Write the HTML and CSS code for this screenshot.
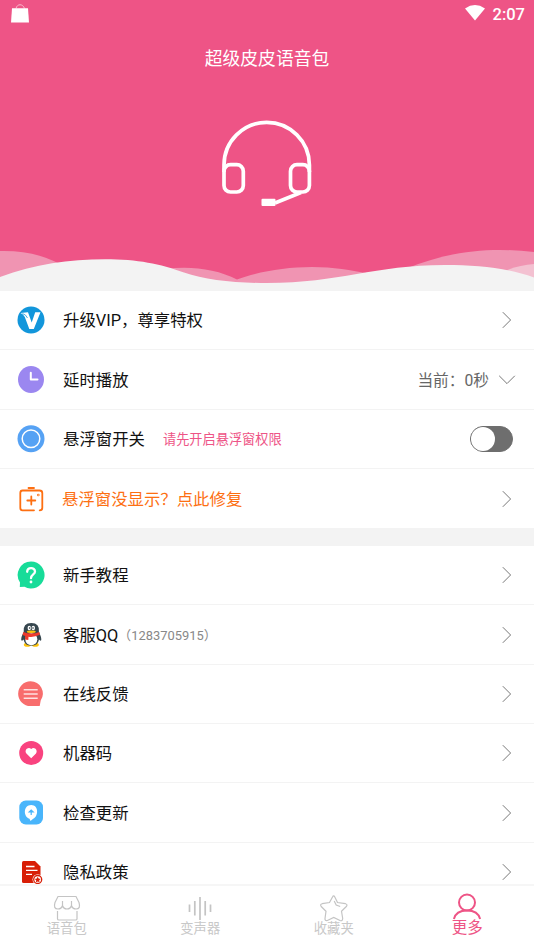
FILE: index.html
```html
<!DOCTYPE html>
<html lang="zh-CN">
<head>
<meta charset="utf-8">
<title>超级皮皮语音包</title>
<link rel="stylesheet" href="styles.css">
</head>
<body>
<div class="app">
  <header class="hero">
    <div class="status">
      <svg width="20" height="20" viewBox="0 0 20 20"><path d="M6 4.500C7-.5 13-.5 14.500 4.500" fill="none" stroke="#f8b9cd" stroke-width="1"/><path d="M2 4.300h16l1 14.200H1z" fill="#fff"/></svg>
      <span class="spacer"></span>
      <svg width="20" height="16" viewBox="0 0 20 16"><path d="M0 3.500Q10-3.300 20 3.500L10 15.500z" fill="#fff"/></svg>
      <span class="time">2:07</span>
    </div>
    <h1 class="title">超级皮皮语音包</h1>
    <svg class="headset" width="94" height="90" viewBox="220 118 94 90" fill="none" stroke="#fff" stroke-width="3.700">
      <path d="M224 172V165A42.700 42.700 0 0 1 309.400 165V172"/>
      <rect x="224" y="164.700" width="19.300" height="27.300" rx="6.500"/>
      <rect x="290.500" y="164.700" width="18.900" height="27.300" rx="6.500"/>
      <path d="M301 192.500L275 203"/><rect x="261.500" y="198.700" width="14" height="7.300" rx="1" fill="#fff" stroke="none"/>
    </svg>
    <svg class="waves" width="534" height="46" viewBox="0 245 534 46">
      <g fill="#f094b2">
        <path d="M0 251C22 250.500 40 254 58 263V291H0z"/>
        <path d="M165 269C190 265.500 217 269 237 279.500C257 272 285 267 312 267C334 267 350 270 370 274V291H165z"/>
        <path d="M405 269C440 255 469 250 500 250Q518 250 534 252V291H405z"/>
      </g>
      <path d="M500 273Q516 265.500 534 264V291H500z" fill="#f3c1d1"/>
      <path d="M0 277C35 264 69 259.300 105 259.300C138 259.300 160 264 184 272.500C205 280 235 283 267 283C340 283 374 265 445 265C478 265 508 268 534 277.500V291H0z" fill="#f3f3f3"/>
    </svg>
  </header>

  <main class="list">
    <section class="group">
      <div class="row">
        <svg class="icon" viewBox="0 0 28 28"><circle cx="14" cy="14" r="13.500" fill="#1296db"/><path d="M3.500 7L11 6.300L14.700 16.500L18.200 6.300H23.500L16.800 23H12.300L7.800 11Q6.200 8 3.500 7z" fill="#fff"/><path d="M5.500 7.500Q9 8.500 10.500 12" stroke="#1296db" stroke-width=".8" fill="none"/></svg>
        <span class="label">升级VIP，尊享特权</span>
        <svg class="chev" viewBox="0 0 10 18"><path d="M.8 1.200L8.600 9L.8 16.800"/></svg>
      </div>
      <div class="row">
        <svg class="icon" viewBox="0 0 28 28"><ellipse cx="14" cy="13.500" rx="13" ry="13.500" fill="#9b87f0"/><path d="M13.800 6.800V13.500H20.500" fill="none" stroke="#fff" stroke-width="2" stroke-linecap="round" stroke-linejoin="round"/></svg>
        <span class="label">延时播放</span>
        <span class="value">当前：0秒</span>
        <svg class="down" viewBox="0 0 18 10"><path d="M1.200 .8L9 8.600L16.800 .8"/></svg>
      </div>
      <div class="row">
        <svg class="icon" viewBox="0 0 28 28"><circle cx="14" cy="13.700" r="13.500" fill="#56a2f4"/><circle cx="14" cy="13.700" r="8.800" fill="none" stroke="#fff" stroke-width="1.500"/></svg>
        <span class="label">悬浮窗开关</span>
        <span class="hint">请先开启悬浮窗权限</span>
        <span class="toggle"></span>
      </div>
      <div class="row last">
        <svg class="icon" viewBox="0 0 28 28" fill="none" stroke="#fd6f12" stroke-width="1.800" stroke-linecap="round"><path d="M17 25.300H5.500Q3.300 25.300 3.300 22.800V8Q3.300 5.500 5.500 5.500H22.500Q25.300 5.500 25.300 8V22.800Q25.300 25.300 22.700 25.300M11.500 3H17M14.300 11.500V19.500M10.300 15.500H18.300"/><circle cx="21.300" cy="10" r=".4"/></svg>
        <span class="label warn">悬浮窗没显示？点此修复</span>
        <svg class="chev" viewBox="0 0 10 18"><path d="M.8 1.200L8.600 9L.8 16.800"/></svg>
      </div>
    </section>

    <section class="group">
      <div class="row">
        <svg class="icon" viewBox="0 0 28 28"><path d="M14 .5A13.500 13.500 0 1 1 7.500 25.800L2.800 26L3 21.500A13.500 13.500 0 0 1 14 .5z" fill="#18dc99"/><path d="M10.200 10.800C10.200 6 18 6 18 10.500C18 13.500 14 13.300 14 17.200" fill="none" stroke="#fff" stroke-width="2.300" stroke-linecap="round"/><circle cx="14" cy="21" r="1.400" fill="#fff"/></svg>
        <span class="label">新手教程</span>
        <svg class="chev" viewBox="0 0 10 18"><path d="M.8 1.200L8.600 9L.8 16.800"/></svg>
      </div>
      <div class="row">
        <svg class="icon" viewBox="0 0 28 28"><ellipse cx="10.300" cy="23.800" rx="3.500" ry="2" fill="#ffc40c"/><ellipse cx="18.300" cy="23.800" rx="3.500" ry="2" fill="#ffc40c"/><path d="M6.700 11Q5.700 2 14.300 2T21.900 11Q24.500 16 24.300 19Q23.500 20.500 22 18.500Q21 24.700 14.300 24.700T6.600 18.500Q5 20.500 4.200 19Q4 16 6.700 11z" fill="#37474f"/><ellipse cx="14.300" cy="18.300" rx="6" ry="6" fill="#fff"/><ellipse cx="12.300" cy="7" rx="1.700" ry="2.300" fill="#fff"/><ellipse cx="16.300" cy="7" rx="1.700" ry="2.300" fill="#fff"/><circle cx="12.600" cy="7" r=".8" fill="#263238"/><circle cx="16" cy="7" r=".8" fill="#263238"/><ellipse cx="14.300" cy="10.700" rx="4.500" ry="1.200" fill="#ffc40c"/><path d="M6.300 11Q14.300 14 22.300 11L23 13.800Q17 16.500 11.500 15.700L11.300 19L8 18.500L8.200 15L5.600 14z" fill="#ef3b2d"/></svg>
        <span class="label">客服QQ</span>
        <span class="note">（1283705915）</span>
        <svg class="chev" viewBox="0 0 10 18"><path d="M.8 1.200L8.600 9L.8 16.800"/></svg>
      </div>
      <div class="row">
        <svg class="icon" viewBox="0 0 28 28"><path d="M13.500 1.300A12.300 12.300 0 0 1 23.700 20.500L22.700 26H13.500A12.300 12.300 0 0 1 13.500 1.300z" fill="#f86d6d"/><path d="M6.700 9.700H20.700M6.700 14H20.700M6.700 18.300H20.700" stroke="#fff" stroke-opacity=".8" stroke-width="1.600"/></svg>
        <span class="label">在线反馈</span>
        <svg class="chev" viewBox="0 0 10 18"><path d="M.8 1.200L8.600 9L.8 16.800"/></svg>
      </div>
      <div class="row">
        <svg class="icon" viewBox="0 0 28 28"><circle cx="14.200" cy="14" r="12" fill="#f9437f"/><path d="M14.200 19.200L9.400 14.500C6.800 11 11.300 7 14.200 10C17.100 7 21.400 11 19 14.500z" fill="#fff"/></svg>
        <span class="label">机器码</span>
        <svg class="chev" viewBox="0 0 10 18"><path d="M.8 1.200L8.600 9L.8 16.800"/></svg>
      </div>
      <div class="row">
        <svg class="icon" viewBox="0 0 28 28"><rect x="2.300" y="1.500" width="23.700" height="24" rx="6.500" fill="#49b5fb"/><path d="M14.200 6C22 6 21.500 17.500 16.200 19.800L13.500 22L12.500 19.800C6 17.500 6.300 6 14.200 6z" fill="#fff"/><path d="M14.200 16V11.500M12.200 13L14.200 11L16.200 13z" stroke="#49b5fb" stroke-width="1.200" fill="#49b5fb"/></svg>
        <span class="label">检查更新</span>
        <svg class="chev" viewBox="0 0 10 18"><path d="M.8 1.200L8.600 9L.8 16.800"/></svg>
      </div>
      <div class="row last">
        <svg class="icon" viewBox="0 0 28 28"><path d="M6.500 3H18L23.500 8.500V25H6.500Q5 25 5 23.500V4.500Q5 3 6.500 3z" fill="#d81e06"/><path d="M9 8.500H17.500M9 12.300H20.500M9 16.300H15" stroke="#fff" stroke-width="1.300"/><circle cx="20.700" cy="21.500" r="5.200" fill="#fff"/><circle cx="20.700" cy="21.500" r="4" fill="#fff" stroke="#d81e06" stroke-width="1.300"/><path d="M20.700 18.700L21.600 20.600L23.600 20.900L22.200 22.300L22.500 24.300L20.700 23.400L18.900 24.300L19.200 22.300L17.800 20.900L19.800 20.600z" fill="#d81e06"/></svg>
        <span class="label">隐私政策</span>
        <svg class="chev" viewBox="0 0 10 18"><path d="M.8 1.200L8.600 9L.8 16.800"/></svg>
      </div>
    </section>
  </main>

  <nav class="tabs">
    <div class="tab">
      <svg viewBox="0 0 32 28"><path d="M7 2.500H25L28 8.500Q30 15 25 15Q21.500 15 20.500 11.500Q19.500 15 16 15T11.500 11.500Q10.500 15 7 15Q2 15 4 8.500zM11.500 11.500V7M20.500 11.500V7M6.500 17V25Q6.500 26 8 26H24.500Q26 26 26 25V17"/></svg>
      <span>语音包</span>
    </div>
    <div class="tab">
      <svg viewBox="0 0 32 28"><path d="M16 3V26M10.800 7V21.500M21.200 7V21.500M5.500 10.500V18M26.500 10.500V18" stroke-width="1.700"/></svg>
      <span>变声器</span>
    </div>
    <div class="tab">
      <svg viewBox="0 0 32 28"><path d="M14.500 3Q15.600 .8 16.800 3L19.500 8.500L27.500 9.700Q30 10.500 28.300 12.500L23.500 17.300L24.700 24.500Q24.500 27.500 22 26.500L15.700 23.500L9.400 26.500Q6.700 27 7 24.500L8 17.300L3.200 12.500Q1.700 10.500 4.200 9.700L11.500 8.500zM16.200 7L18.200 11L22.200 12.500"/></svg>
      <span>收藏夹</span>
    </div>
    <div class="tab active">
      <svg viewBox="0 0 32 28"><circle cx="16" cy="9.500" r="8"/><path d="M2.900 26C4.500 19.500 9 17.500 16 17.500S27.500 19.500 29.100 26"/></svg>
      <span>更多</span>
    </div>
  </nav>
</div>
</body>
</html>
```
FILE: styles.css
```css
* { box-sizing: border-box; }
body {
  margin: 0;
  font-family: Roboto, "Noto Sans CJK SC", sans-serif;
  color: #111;
}
svg { display: block; flex: none; }
.app {
  display: flex;
  flex-direction: column;
  height: 949px;
  overflow: hidden;
  background: #f3f3f3;
}
.hero {
  flex: none;
  display: flex;
  flex-direction: column;
  align-items: center;
  height: 291px;
  background: #ee5486;
}
.status {
  display: flex;
  width: 100%;
  height: 28px;
  padding: 4px 9px 0 10px;
}
.status svg:last-of-type { margin-top: 1px; }
.spacer { flex: 1; }
.time {
  margin-left: 8px;
  font-size: 16.500px;
  line-height: 21px;
  font-weight: 500;
  color: #fff;
}
.title {
  margin: 17px 0 0;
  font-size: 17.800px;
  line-height: 28px;
  font-weight: 400;
  color: #fff;
}
.headset { margin-top: 45px; }
.waves { margin-top: auto; }
.list { flex: 1; min-height: 0; overflow: hidden; }
.group { background: #fff; }
.group + .group { margin-top: 18px; }
.row {
  display: flex;
  align-items: center;
  height: 59.350px;
  padding: 0 22px 0 17px;
  border-bottom: 1.500px solid #f3f3f3;
}
.row.last { height: 59px; border-bottom: 0; }
.icon { width: 28px; height: 28px; margin-right: 18px; }
.label {
  padding-top: 2px;
  font-size: 16.400px;
  line-height: 24px;
  white-space: nowrap;
}
.warn { margin-left: -1px; color: #fd6f12; }
.chev, .down { fill: none; stroke: #777; stroke-width: 1; }
.chev { width: 10px; height: 18px; margin-left: auto; }
.down { width: 18px; height: 10px; margin: 0 -4px 0 9px; }
.value { margin-left: auto; font-size: 15.700px; color: #666; }
.hint { margin-left: 18px; font-size: 13.200px; color: #ee5486; }
.note { font-size: 12.900px; color: #888; }
.toggle {
  width: 43px;
  height: 26px;
  margin: 0 -1px 0 auto;
  border: 1px solid #6e6e6e;
  border-radius: 13px;
  background: #6e6e6e;
}
.toggle::before {
  content: "";
  display: block;
  width: 24px;
  height: 24px;
  border-radius: 50%;
  background: #fff;
}
.tabs {
  flex: none;
  display: flex;
  height: 65px;
  border-top: 2px solid #f6f6f6;
  background: #fff;
}
.tab {
  flex: 1;
  display: flex;
  flex-direction: column;
  align-items: center;
  padding-top: 8px;
  font-size: 13.300px;
  line-height: 14px;
  color: #c8c8c8;
}
.tab svg {
  width: 32px;
  height: 28px;
  fill: none;
  stroke: #c4c4c4;
  stroke-width: 1.200;
}
.active { color: #ee5486; font-size: 15.500px; }
.active svg { stroke: #ee5486; stroke-width: 2; margin: -1px 0 0; }
```
